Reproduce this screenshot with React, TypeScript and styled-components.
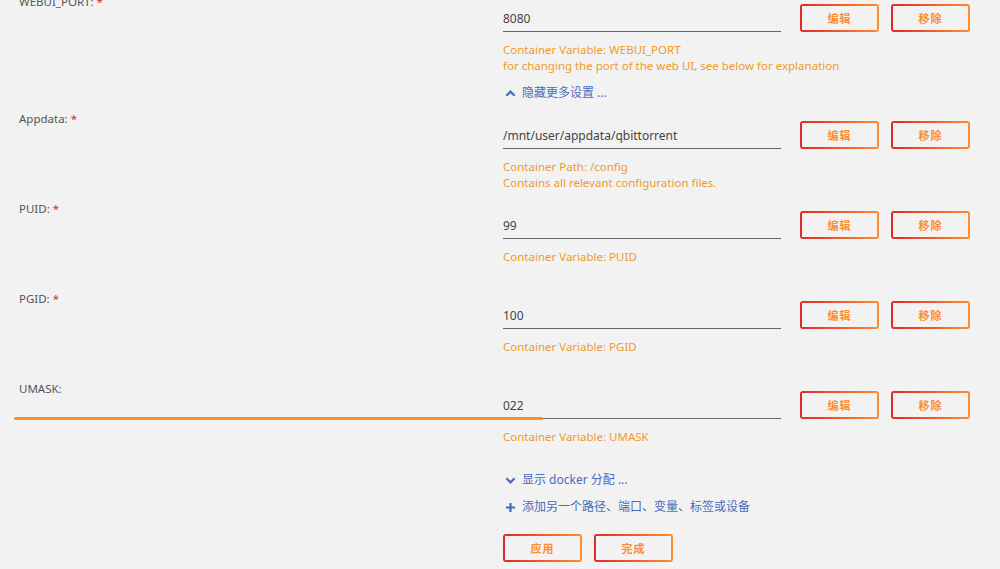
import React from 'react';
import styled, { createGlobalStyle } from 'styled-components';

interface Field {
  label: string;
  required?: boolean;
  value: string;
  desc: string[];
  focused?: boolean;
}

const fields: Field[] = [
  {
    label: 'WEBUI_PORT:',
    required: true,
    value: '8080',
    desc: [
      'Container Variable: WEBUI_PORT',
      'for changing the port of the web UI, see below for explanation',
    ],
  },
  {
    label: 'Appdata:',
    required: true,
    value: '/mnt/user/appdata/qbittorrent',
    desc: ['Container Path: /config', 'Contains all relevant configuration files.'],
  },
  { label: 'PUID:', required: true, value: '99', desc: ['Container Variable: PUID'] },
  { label: 'PGID:', required: true, value: '100', desc: ['Container Variable: PGID'] },
  { label: 'UMASK:', value: '022', desc: ['Container Variable: UMASK'], focused: true },
];

const GlobalStyle = createGlobalStyle`
  body {
    margin: 0;
    background: #f2f2f2;
    font-family: "Noto Sans", "Noto Sans CJK SC", sans-serif;
    overflow: hidden;
  }
`;

function App() {
  return (
    <>
      <GlobalStyle />
      <Page>
        {fields.map((f, i) => (
          <Row key={f.label}>
            <Label>
              {f.label}
              {f.required && <Star> *</Star>}
            </Label>
            <Content>
              <InputLine>
                <Input>{f.value}</Input>
                <Button>编辑</Button>
                <Button>移除</Button>
              </InputLine>
              <Desc>
                {f.desc.map((d) => (
                  <div key={d}>{d}</div>
                ))}
              </Desc>
              {i === 0 && (
                <LinkRow $top={10}>
                  <svg width="11" height="11" viewBox="0 0 12 12">
                    <path d="M1.5 8.5 L6 4 L10.5 8.5" fill="none" stroke="#486dba" strokeWidth="2.4" />
                  </svg>
                  隐藏更多设置 ...
                </LinkRow>
              )}
            </Content>
            {f.focused && <FocusBar />}
          </Row>
        ))}
        <Footer>
          <LinkRow $top={1}>
            <svg width="11" height="11" viewBox="0 0 12 12">
              <path d="M1.5 3.5 L6 8 L10.5 3.5" fill="none" stroke="#486dba" strokeWidth="2.4" />
            </svg>
            显示 docker 分配 ...
          </LinkRow>
          <LinkRow $top={9}>
            <svg width="11" height="11" viewBox="0 0 12 12">
              <path d="M6 1 V11 M1 6 H11" fill="none" stroke="#486dba" strokeWidth="2.4" />
            </svg>
            添加另一个路径、端口、变量、标签或设备
          </LinkRow>
          <Actions>
            <Button>应用</Button>
            <Button>完成</Button>
          </Actions>
        </Footer>
      </Page>
    </>
  );
}

const Page = styled.div`
  margin-top: -7px;
  padding-left: 19px;
`;

const Row = styled.div`
  position: relative;
  display: grid;
  grid-template-columns: 484px 1fr;
  min-height: 90px;
  &:first-child {
    min-height: 117px;
  }
`;

const Label = styled.div`
  font-size: 11.5px;
  line-height: 18px;
  color: #555555;
`;

const Star = styled.span`
  color: #e22828;
`;

const Content = styled.div`
  padding-top: 11px;
`;

const InputLine = styled.div`
  display: flex;
  align-items: center;
  gap: 12px;
`;

const Input = styled.div`
  width: 278px;
  height: 27px;
  margin-right: 7px;
  box-sizing: border-box;
  border-bottom: 1px solid #666666;
  font-size: 12px;
  line-height: 27px;
  color: #444444;
`;

const Button = styled.button`
  width: 79px;
  height: 28px;
  padding: 0;
  border: none;
  border-radius: 3px;
  cursor: pointer;
  font-family: "Noto Sans CJK SC", sans-serif;
  font-size: 11px;
  font-weight: 700;
  letter-spacing: 1px;
  color: #ff8c2f;
  background:
    linear-gradient(90deg, #e22828, #ff8c2f) 0 0 / 100% 2px no-repeat,
    linear-gradient(90deg, #e22828, #ff8c2f) 0 100% / 100% 2px no-repeat,
    linear-gradient(#e22828, #e22828) 0 0 / 2px 100% no-repeat,
    linear-gradient(#ff8c2f, #ff8c2f) 100% 0 / 2px 100% no-repeat,
    #f2f2f2;
`;

const Desc = styled.div`
  margin-top: 10px;
  font-size: 11.5px;
  line-height: 16px;
  color: #f09a2a;
`;

const LinkRow = styled.div<{ $top: number }>`
  display: flex;
  align-items: center;
  gap: 6px;
  margin-top: ${(p) => p.$top}px;
  font-size: 12px;
  line-height: 18px;
  color: #486dba;
  svg {
    flex: none;
    margin-left: 2px;
  }
`;

const FocusBar = styled.div`
  position: absolute;
  left: -5px;
  top: 37px;
  width: 529px;
  height: 3px;
  border-radius: 2px;
  background: #ff8c2f;
`;

const Footer = styled.div`
  margin-left: 484px;
`;

const Actions = styled.div`
  display: flex;
  gap: 12px;
  margin-top: 18px;
`;

export default App;
